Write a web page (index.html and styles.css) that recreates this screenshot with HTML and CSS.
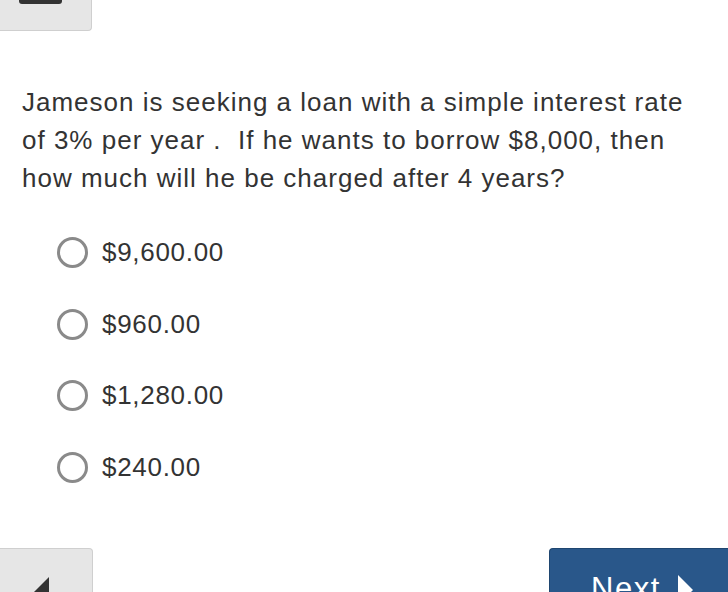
FILE: index.html
```html
<!DOCTYPE html>
<html>
<head>
<meta charset="utf-8">
<link rel="stylesheet" href="styles.css">
</head>
<body>
<div class="top-btn"><span class="bar"></span></div>
<p class="question">Jameson is seeking a loan with a simple interest rate of 3% per year .&nbsp; If he wants to borrow $8,000, then how much will he be charged after 4 years?</p>
<ul class="options">
  <li class="option"><span class="radio"></span><span class="label">$9,600.00</span></li>
  <li class="option"><span class="radio"></span><span class="label">$960.00</span></li>
  <li class="option"><span class="radio"></span><span class="label">$1,280.00</span></li>
  <li class="option"><span class="radio"></span><span class="label">$240.00</span></li>
</ul>
<div class="nav">
  <div class="prev"><span class="tri-left"></span></div>
  <div class="next"><span class="next-text">Next</span><span class="tri-right"></span></div>
</div>
</body>
</html>
```
FILE: styles.css
```css
html, body {
  margin: 0;
  padding: 0;
  background: #fff;
  width: 728px;
  height: 592px;
  overflow: hidden;
  font-family: "Liberation Sans", Arial, sans-serif;
  color: #333;
}
.top-btn {
  display: flex;
  box-sizing: border-box;
  width: 92px;
  height: 31px;
  padding-left: 19px;
  background: #e6e6e6;
  border-right: 1px solid #cfcfcf;
  border-bottom: 1px solid #cfcfcf;
  border-bottom-right-radius: 4px;
}
.bar {
  width: 43px;
  height: 4px;
  background: #333;
  border-radius: 0 0 3px 3px;
}
.question {
  margin: 52px 0 0 22px;
  width: 690px;
  font-size: 26px;
  line-height: 38px;
  letter-spacing: 1px;
}
.options {
  list-style: none;
  margin: 40px 0 0 0;
  padding: 0 0 0 57px;
  display: flex;
  flex-direction: column;
  gap: 40.5px;
}
.option {
  display: flex;
  align-items: center;
  height: 31px;
  font-size: 26px;
  letter-spacing: 0.7px;
}
.radio {
  width: 31px;
  height: 31px;
  box-sizing: border-box;
  border: 3px solid #8a8a8a;
  border-radius: 50%;
  flex: none;
}
.label {
  margin-left: 14px;
}
.nav {
  display: flex;
  justify-content: space-between;
  margin-top: 65.5px;
}
.prev {
  position: relative;
  width: 93px;
  height: 60px;
  box-sizing: border-box;
  background: #e6e6e6;
  border: 1px solid #cfcfcf;
  border-left: none;
  border-radius: 0 4px 0 0;
}
.tri-left {
  position: absolute;
  left: 33px;
  top: 28px;
  width: 0;
  height: 0;
  border-right: 16px solid #333;
  border-top: 16px solid transparent;
  border-bottom: 16px solid transparent;
}
.next {
  display: flex;
  align-items: flex-start;
  width: 179px;
  height: 60px;
  box-sizing: border-box;
  padding: 24px 0 0 41px;
  background: #29578a;
  border: 1px solid #1f4670;
  border-right: none;
  border-radius: 4px 0 0 0;
  color: #fff;
  font-size: 31px;
  letter-spacing: 1.5px;
}
.next-text {
  line-height: 31px;
}
.tri-right {
  margin: 2px 0 0 17px;
  width: 0;
  height: 0;
  border-left: 15px solid #fff;
  border-top: 15px solid transparent;
  border-bottom: 15px solid transparent;
}
```
